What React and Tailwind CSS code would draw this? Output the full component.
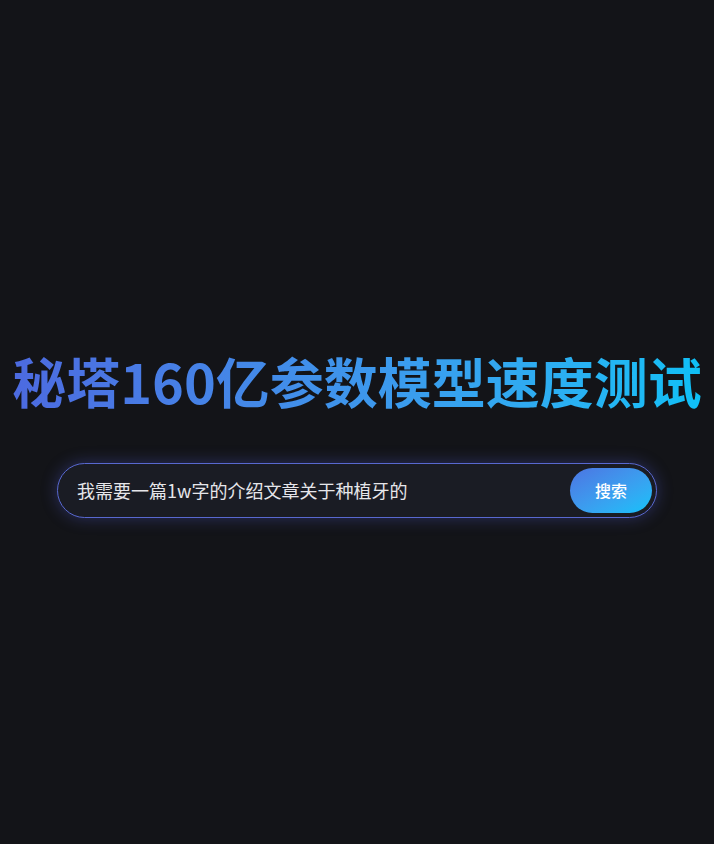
import React, { useState } from 'react';

const App = () => {
  const [query, setQuery] = useState('我需要一篇1w字的介绍文章关于种植牙的');

  return (
    <div
      className="flex min-h-screen flex-col items-center justify-center bg-[#131418] pt-[18px]"
      style={{ fontFamily: '"Noto Sans CJK SC", "Noto Sans", sans-serif' }}
    >
      <h1 className="whitespace-nowrap bg-gradient-to-r from-[#4c6ae0] to-[#0dc0f6] bg-clip-text text-[54px] font-bold leading-[72px] text-transparent">
        秘塔160亿参数模型速度测试
      </h1>

      <div className="mt-[46px] flex h-[55px] w-[600px] items-center rounded-full border border-[#5868d0] bg-[#1a1c24] pl-[19px] pr-1 shadow-[0_0_16px_rgba(90,100,230,0.35)]">
        <input
          className="min-w-0 flex-1 bg-transparent text-[18px] text-[#e6e6ea] outline-none"
          value={query}
          onChange={(e) => setQuery(e.target.value)}
        />
        <button className="h-[45px] w-[82px] rounded-full bg-gradient-to-br from-[#4b74e2] to-[#08c2fa] text-[16px] font-medium text-white">
          搜索
        </button>
      </div>
    </div>
  );
};

export default App;
